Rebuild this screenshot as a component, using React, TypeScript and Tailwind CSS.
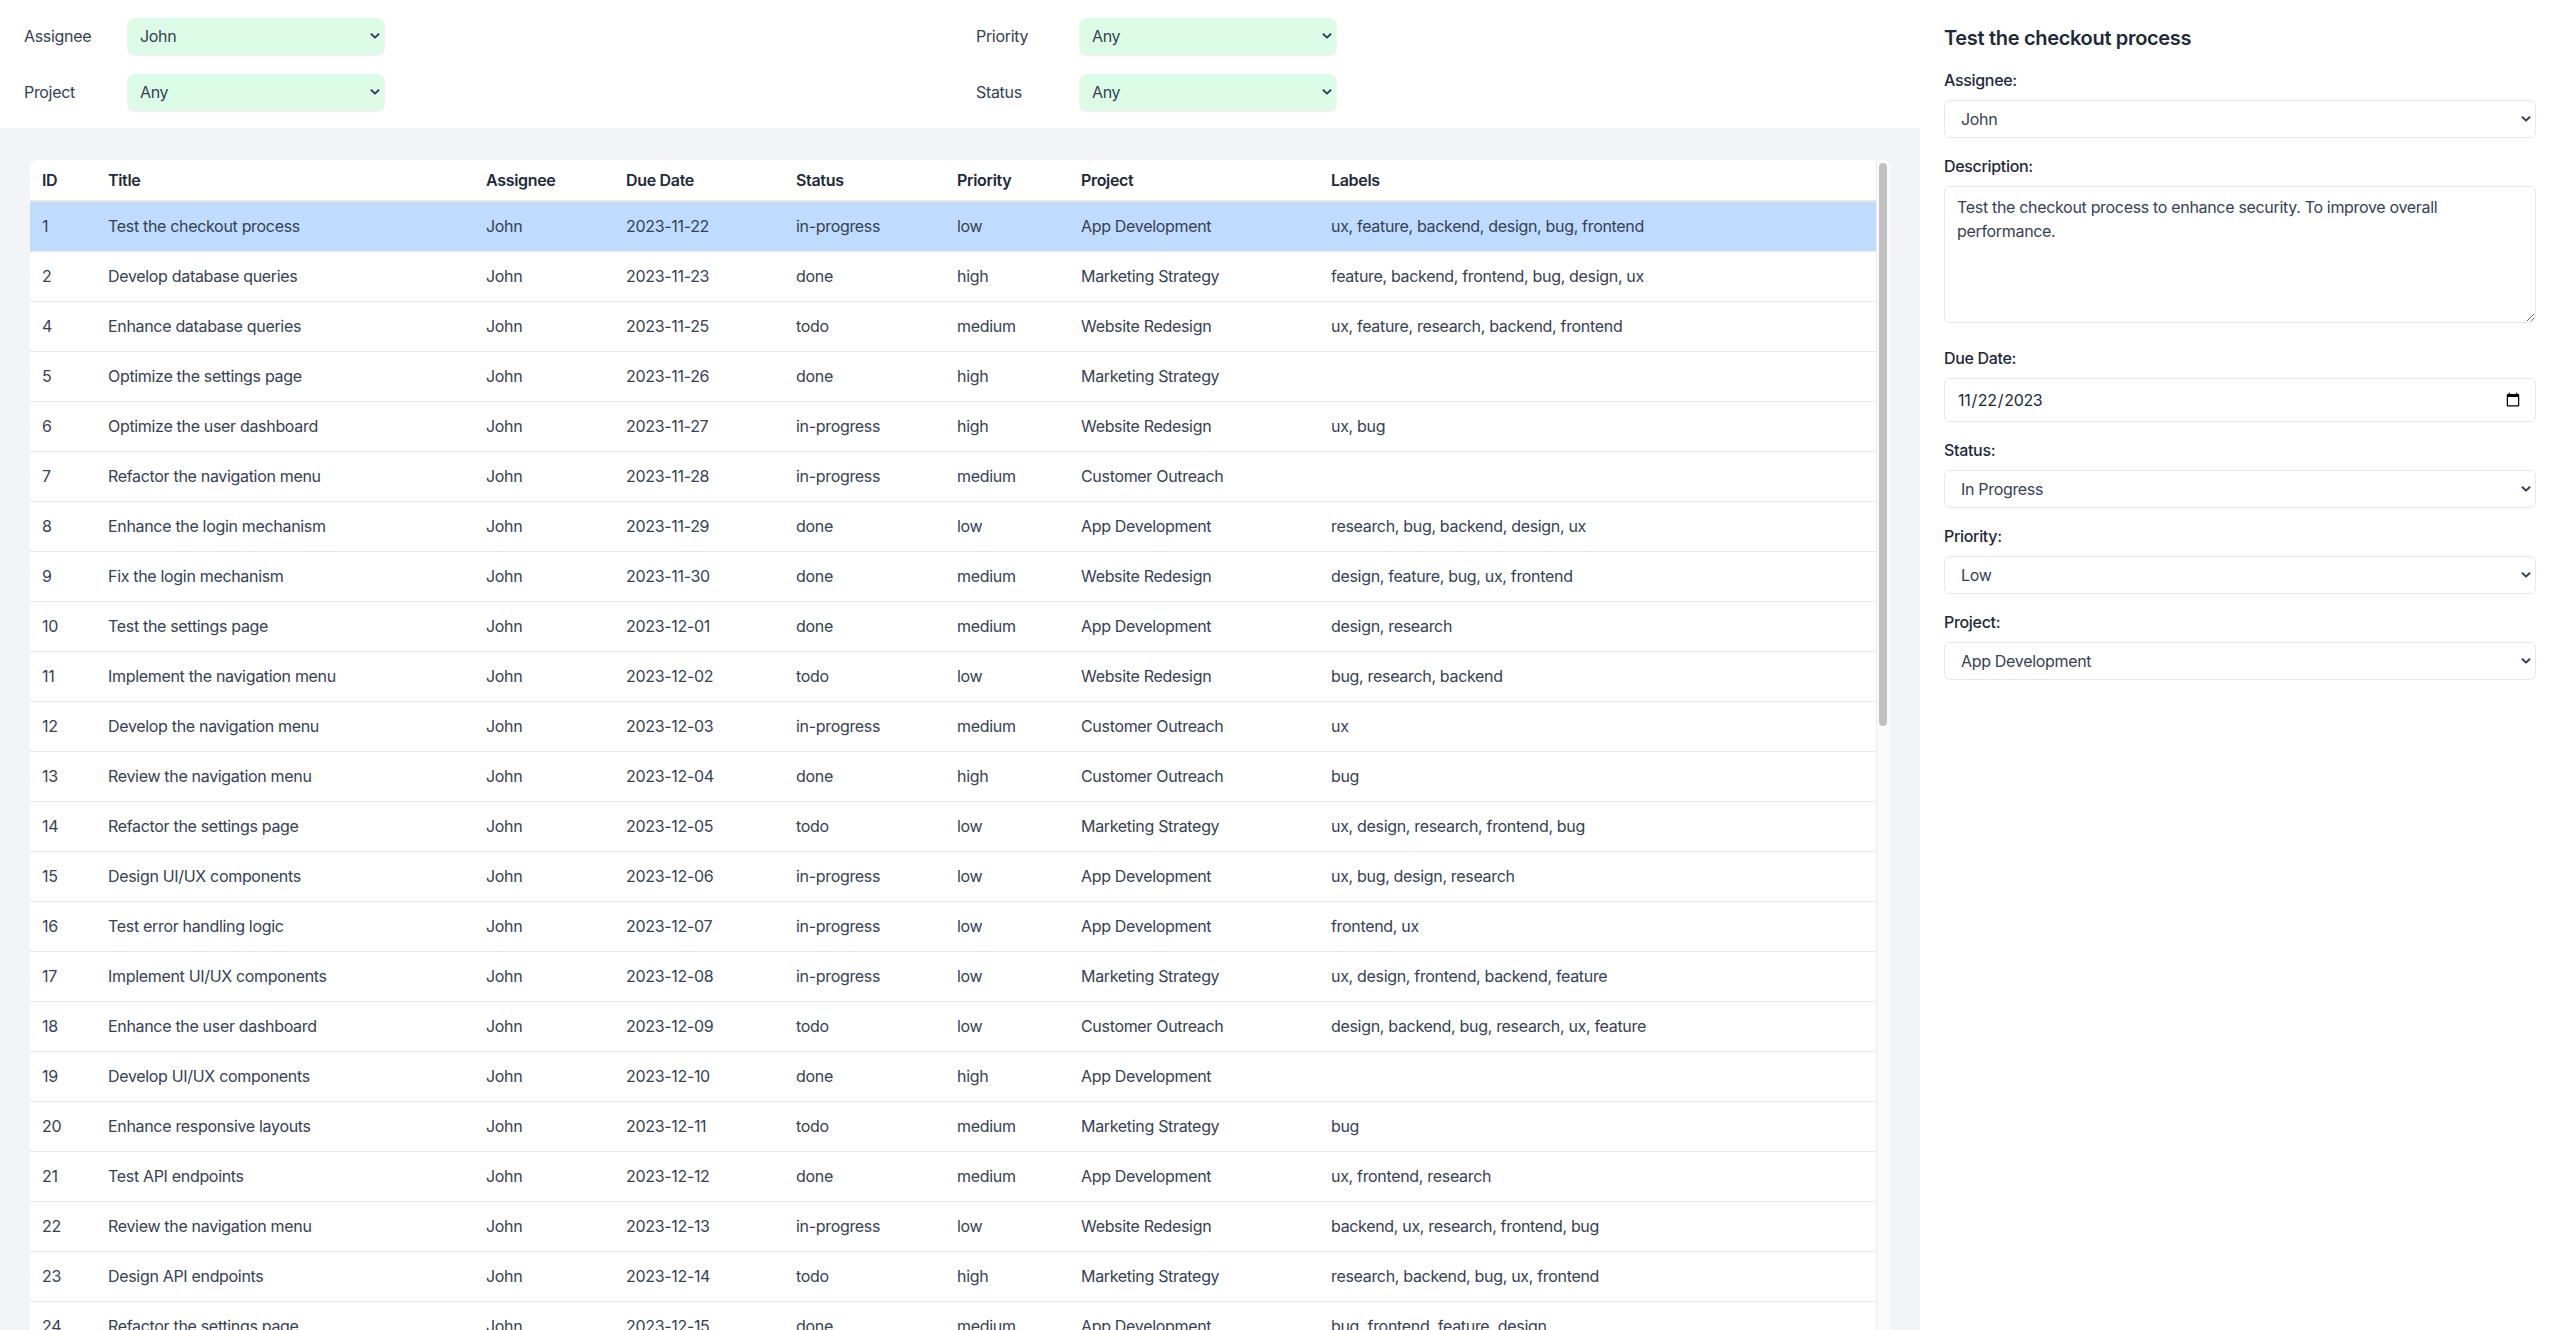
import React from "react";

type Task = {
  id: number;
  title: string;
  due: string;
  status: string;
  priority: string;
  project: string;
  labels: string;
};

const rows: [number, string, string, string, string, string][] = [
  [1, "Test the checkout process", "in-progress", "low", "App Development", "ux, feature, backend, design, bug, frontend"],
  [2, "Develop database queries", "done", "high", "Marketing Strategy", "feature, backend, frontend, bug, design, ux"],
  [4, "Enhance database queries", "todo", "medium", "Website Redesign", "ux, feature, research, backend, frontend"],
  [5, "Optimize the settings page", "done", "high", "Marketing Strategy", ""],
  [6, "Optimize the user dashboard", "in-progress", "high", "Website Redesign", "ux, bug"],
  [7, "Refactor the navigation menu", "in-progress", "medium", "Customer Outreach", ""],
  [8, "Enhance the login mechanism", "done", "low", "App Development", "research, bug, backend, design, ux"],
  [9, "Fix the login mechanism", "done", "medium", "Website Redesign", "design, feature, bug, ux, frontend"],
  [10, "Test the settings page", "done", "medium", "App Development", "design, research"],
  [11, "Implement the navigation menu", "todo", "low", "Website Redesign", "bug, research, backend"],
  [12, "Develop the navigation menu", "in-progress", "medium", "Customer Outreach", "ux"],
  [13, "Review the navigation menu", "done", "high", "Customer Outreach", "bug"],
  [14, "Refactor the settings page", "todo", "low", "Marketing Strategy", "ux, design, research, frontend, bug"],
  [15, "Design UI/UX components", "in-progress", "low", "App Development", "ux, bug, design, research"],
  [16, "Test error handling logic", "in-progress", "low", "App Development", "frontend, ux"],
  [17, "Implement UI/UX components", "in-progress", "low", "Marketing Strategy", "ux, design, frontend, backend, feature"],
  [18, "Enhance the user dashboard", "todo", "low", "Customer Outreach", "design, backend, bug, research, ux, feature"],
  [19, "Develop UI/UX components", "done", "high", "App Development", ""],
  [20, "Enhance responsive layouts", "todo", "medium", "Marketing Strategy", "bug"],
  [21, "Test API endpoints", "done", "medium", "App Development", "ux, frontend, research"],
  [22, "Review the navigation menu", "in-progress", "low", "Website Redesign", "backend, ux, research, frontend, bug"],
  [23, "Design API endpoints", "todo", "high", "Marketing Strategy", "research, backend, bug, ux, frontend"],
  [24, "Refactor the settings page", "done", "medium", "App Development", "bug, frontend, feature, design"],
  [25, "Fix error handling logic", "todo", "low", "Customer Outreach", "ux, research"],
];

function dueFor(id: number) {
  const d = new Date(Date.UTC(2023, 10, 22 + id - 1));
  return d.toISOString().slice(0, 10);
}

const tasks: Task[] = rows.map(([id, title, status, priority, project, labels]) => ({
  id,
  title,
  due: dueFor(id),
  status,
  priority,
  project,
  labels,
}));

function Chevron({ className }: { className: string }) {
  return (
    <svg
      viewBox="0 0 10 6"
      className={className}
      fill="none"
      stroke="currentColor"
      strokeWidth="2"
      strokeLinecap="round"
      strokeLinejoin="round"
    >
      <path d="M1.5 1.2 5 4.6l3.5-3.4" />
    </svg>
  );
}

function FilterSelect({ label, value }: { label: string; value: string }) {
  return (
    <div className="flex items-center">
      <label className="mr-2 w-24 text-base text-gray-700">{label}</label>
      <div className="relative w-64">
        <select
          defaultValue={value}
          className="h-9 w-full appearance-none rounded-md bg-[#dcfce7] pl-3 text-base text-gray-700 shadow-sm outline-none"
        >
          <option>Any</option>
          <option>John</option>
        </select>
        <Chevron className="pointer-events-none absolute right-[4px] top-1/2 h-[6px] w-[10px] -translate-y-1/2 text-slate-700" />
      </div>
    </div>
  );
}

function PanelSelect({ value, options }: { value: string; options: string[] }) {
  return (
    <div className="relative">
      <select
        defaultValue={value}
        className="block h-[38px] w-full appearance-none rounded-md border border-gray-200 bg-white pl-4 text-base text-gray-700 outline-none"
      >
        {options.map((o) => (
          <option key={o}>{o}</option>
        ))}
      </select>
      <Chevron className="pointer-events-none absolute right-[5px] top-1/2 h-[6px] w-[10px] -translate-y-1/2 text-slate-700" />
    </div>
  );
}

const heads = [
  ["ID", "w-[66px]"],
  ["Title", "w-[378px]"],
  ["Assignee", "w-[140px]"],
  ["Due Date", "w-[170px]"],
  ["Status", "w-[161px]"],
  ["Priority", "w-[124px]"],
  ["Project", "w-[250px]"],
  ["Labels", ""],
];

export default function App() {
  return (
    <div className="flex h-screen overflow-hidden bg-white font-['Inter','Liberation_Sans',sans-serif] tracking-[-0.02em] text-gray-700">
      <div className="flex w-[1920px] shrink-0 flex-col">
        <div className="grid grid-cols-2 gap-x-8 gap-y-5 bg-white px-6 py-[18px]">
          <FilterSelect label="Assignee" value="John" />
          <FilterSelect label="Priority" value="Any" />
          <FilterSelect label="Project" value="Any" />
          <FilterSelect label="Status" value="Any" />
        </div>
        <div className="min-h-0 flex-1 bg-gray-100 px-[30px] pt-8">
          <div className="flex h-full overflow-hidden rounded-t-lg bg-white">
            <div className="min-w-0 flex-1 overflow-hidden">
              <table className="w-full table-fixed border-collapse text-left text-base">
                <thead>
                  <tr className="h-[41px] border-b-2 border-gray-200">
                    {heads.map(([h, w]) => (
                      <th key={h} className={`${w} px-3 font-semibold text-gray-800`}>
                        {h}
                      </th>
                    ))}
                  </tr>
                </thead>
                <tbody>
                  {tasks.map((t) => (
                    <tr
                      key={t.id}
                      className={`h-[50px] border-b border-gray-200 ${t.id === 1 ? "bg-[#bfdbfe]" : ""}`}
                    >
                      <td className="px-3">{t.id}</td>
                      <td className="px-3">{t.title}</td>
                      <td className="px-3">John</td>
                      <td className="px-3">{t.due}</td>
                      <td className="px-3">{t.status}</td>
                      <td className="px-3">{t.priority}</td>
                      <td className="px-3">{t.project}</td>
                      <td className="px-3">{t.labels}</td>
                    </tr>
                  ))}
                </tbody>
              </table>
            </div>
            <div className="w-[14px] shrink-0 border-l border-[#ececec] bg-[#fafafa]">
              <div className="ml-[2px] mt-[3px] h-[563px] w-[8px] rounded-full bg-[#c1c1c1]" />
            </div>
          </div>
        </div>
      </div>
      <aside className="w-[640px] shrink-0 bg-white p-6">
        <h2 className="mb-4 text-xl font-semibold text-gray-800">Test the checkout process</h2>
        <div className="mb-4">
          <label className="mb-2 block font-medium text-gray-800">Assignee:</label>
          <PanelSelect value="John" options={["John", "Jane"]} />
        </div>
        <div className="mb-[23px]">
          <label className="mb-2 block font-medium text-gray-800">Description:</label>
          <textarea
            defaultValue="Test the checkout process to enhance security. To improve overall performance."
            className="block h-[137px] w-full resize-y rounded-md border border-gray-200 px-3 py-2 text-base leading-6 text-gray-700 outline-none"
          />
        </div>
        <div className="mb-4">
          <label className="mb-2 block font-medium text-gray-800">Due Date:</label>
          <input
            type="date"
            defaultValue="2023-11-22"
            className="block h-[44px] w-full rounded-md border border-gray-200 px-3 text-base text-gray-800 outline-none"
          />
        </div>
        <div className="mb-4">
          <label className="mb-2 block font-medium text-gray-800">Status:</label>
          <PanelSelect value="In Progress" options={["To Do", "In Progress", "Done"]} />
        </div>
        <div className="mb-4">
          <label className="mb-2 block font-medium text-gray-800">Priority:</label>
          <PanelSelect value="Low" options={["Low", "Medium", "High"]} />
        </div>
        <div className="mb-4">
          <label className="mb-2 block font-medium text-gray-800">Project:</label>
          <PanelSelect
            value="App Development"
            options={["App Development", "Marketing Strategy", "Website Redesign", "Customer Outreach"]}
          />
        </div>
      </aside>
    </div>
  );
}
